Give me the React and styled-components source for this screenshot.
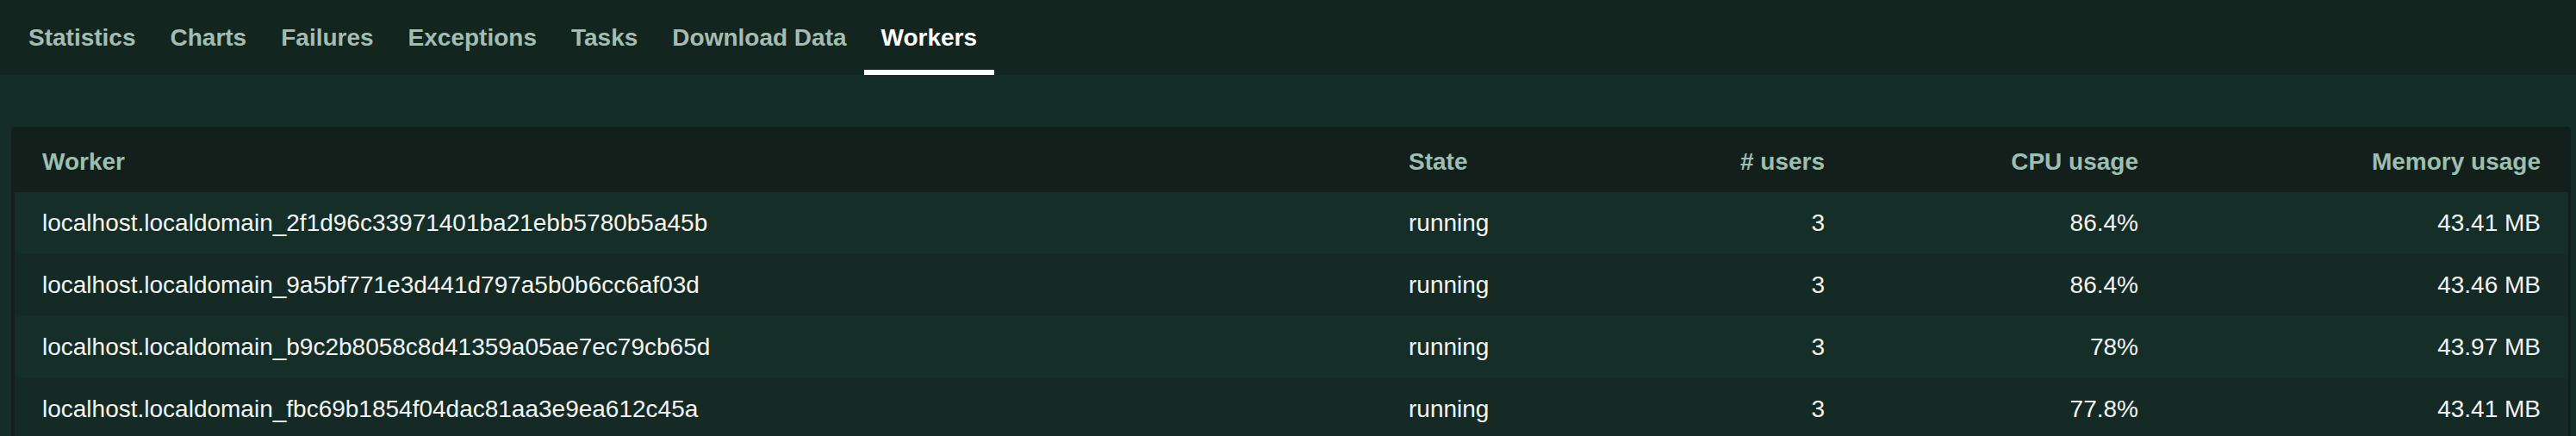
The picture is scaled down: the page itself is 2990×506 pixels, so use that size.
import React from 'react';
import styled, { createGlobalStyle } from 'styled-components';

const GlobalStyle = createGlobalStyle`
    html, body {
        margin: 0;
        padding: 0;
        background: #152d27;
        font-family: "Liberation Sans", Arial, Helvetica, sans-serif;
    }
`;

const Page = styled.div`
    min-height: 506px;
    background: #152d27;
`;

const TabBar = styled.nav`
    display: flex;
    height: 87px;
    padding-left: 13px;
    background: #13251f;
`;

const Tab = styled.div`
    display: flex;
    align-items: center;
    padding: 0 20px;
    font-size: 28px;
    font-weight: bold;
    color: ${(p) => (p.active ? '#ffffff' : '#a4bcb1')};
    box-shadow: ${(p) => (p.active ? 'inset 0 -6px 0 #ffffff' : 'none')};
    white-space: nowrap;
    cursor: pointer;
`;

const Card = styled.div`
    margin: 60px 6px 0 13px;
    padding: 0 3px 0 4px;
    background: #121f1a;
    border-radius: 5px 5px 0 0;
`;

const columns = '1586px 273px 274px 364px 467px';

const HeaderRow = styled.div`
    display: grid;
    grid-template-columns: ${columns};
    height: 76px;
    background: #121f1a;
`;

const HeadCell = styled.div`
    display: flex;
    align-items: center;
    justify-content: ${(p) => (p.right ? 'flex-end' : 'flex-start')};
    box-sizing: border-box;
    padding: 6px 32px 0;
    font-size: 28px;
    font-weight: bold;
    color: #9cbfb2;
    white-space: nowrap;
`;

const Row = styled.div`
    display: grid;
    grid-template-columns: ${columns};
    height: 72px;
    background: ${(p) => (p.odd ? '#162e28' : '#152a24')};
`;

const Cell = styled.div`
    display: flex;
    align-items: center;
    justify-content: ${(p) => (p.right ? 'flex-end' : 'flex-start')};
    padding: 0 32px;
    font-size: 28px;
    color: #f2f4f3;
    white-space: nowrap;
`;

const tabs = ['Statistics', 'Charts', 'Failures', 'Exceptions', 'Tasks', 'Download Data', 'Workers'];

const workers = [
    { id: 'localhost.localdomain_2f1d96c33971401ba21ebb5780b5a45b', state: 'running', users: 3, cpu: '86.4%', mem: '43.41 MB' },
    { id: 'localhost.localdomain_9a5bf771e3d441d797a5b0b6cc6af03d', state: 'running', users: 3, cpu: '86.4%', mem: '43.46 MB' },
    { id: 'localhost.localdomain_b9c2b8058c8d41359a05ae7ec79cb65d', state: 'running', users: 3, cpu: '78%', mem: '43.97 MB' },
    { id: 'localhost.localdomain_fbc69b1854f04dac81aa3e9ea612c45a', state: 'running', users: 3, cpu: '77.8%', mem: '43.41 MB' },
];

export default function App() {
    return (
        <Page>
            <GlobalStyle />
            <TabBar>
                {tabs.map((t) => (
                    <Tab key={t} active={t === 'Workers'}>
                        {t}
                    </Tab>
                ))}
            </TabBar>
            <Card>
                <HeaderRow>
                    <HeadCell>Worker</HeadCell>
                    <HeadCell>State</HeadCell>
                    <HeadCell right># users</HeadCell>
                    <HeadCell right>CPU usage</HeadCell>
                    <HeadCell right>Memory usage</HeadCell>
                </HeaderRow>
                {workers.map((w, i) => (
                    <Row key={w.id} odd={i % 2 === 0}>
                        <Cell>{w.id}</Cell>
                        <Cell>{w.state}</Cell>
                        <Cell right>{w.users}</Cell>
                        <Cell right>{w.cpu}</Cell>
                        <Cell right>{w.mem}</Cell>
                    </Row>
                ))}
            </Card>
        </Page>
    );
}
